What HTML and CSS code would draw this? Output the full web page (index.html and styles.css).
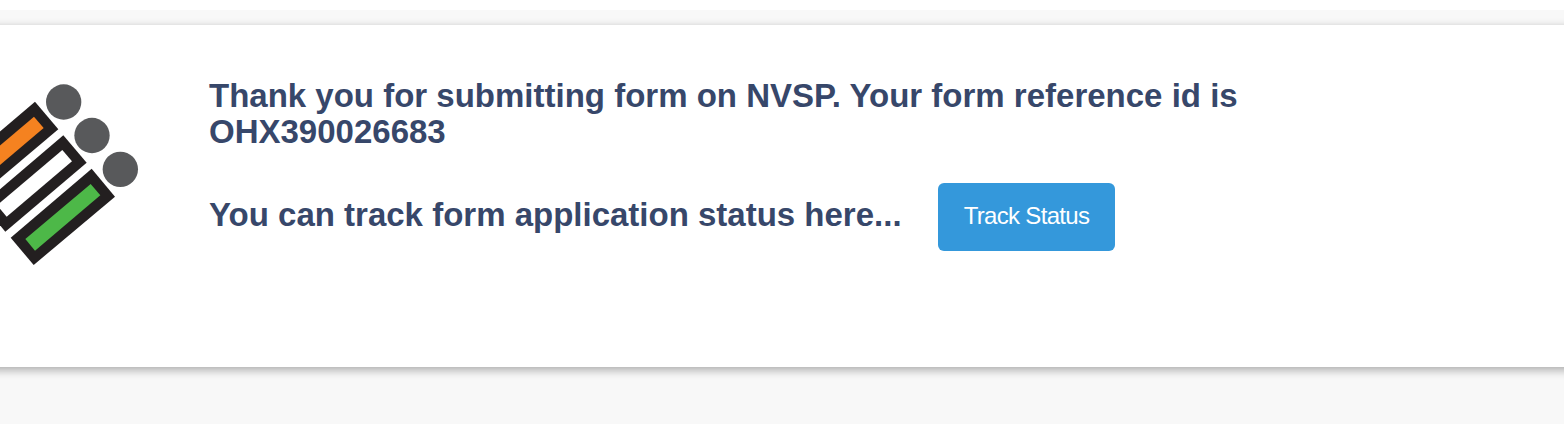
FILE: index.html
```
<!DOCTYPE html>
<html lang="en">
<head>
<meta charset="utf-8">
<title>Form submitted</title>
<link rel="stylesheet" href="styles.css">
</head>
<body>
<main class="page">
  <section class="card">
    <svg class="logo" viewBox="0 0 450 600" aria-hidden="true">
      <g fill="#231f20">
        <path d="M105 95 175 178-69 384-138 302Z"/>
        <path d="M190 196 260 278 16 485-53 403Z"/>
        <path d="M275 296 345 380 101 585 32 503Z"/>
      </g>
      <path fill="#f58220" d="M102 140 131 174-65 340-94 306Z"/>
      <path fill="#fff" d="M187 240 216 274 20 440-9 406Z"/>
      <path fill="#4db848" d="M272 342 301 376 105 542 76 507Z"/>
      <g fill="#58595b">
        <circle cx="191" cy="96" r="53"/>
        <circle cx="276" cy="196.500" r="53"/>
        <circle cx="361" cy="298" r="53"/>
      </g>
    </svg>
    <div class="content">
      <h1 class="message">Thank you for submitting form on NVSP. Your form reference id is<br>OHX390026683</h1>
      <div class="track">
        <h2 class="message">You can track form application status here...</h2>
        <button class="button" type="button">Track Status</button>
      </div>
    </div>
  </section>
</main>
</body>
</html>
```

FILE: styles.css
```
body {
  display: flow-root;
  margin: 0;
  background: #fff;
  font-family: "Liberation Sans", Arial, sans-serif;
}

.page {
  box-sizing: border-box;
  height: 414px;
  margin-top: 10px;
  padding-top: 15px;
  background: #f8f8f8;
  overflow: hidden;
}

.card {
  display: flex;
  height: 342px;
  margin: 0 -20px;
  padding: 0 20px;
  background: #fff;
  box-shadow: 0 3px 9px rgba(0, 0, 0, .32);
}

.logo {
  flex: none;
  width: 150px;
  height: 200px;
  margin-top: 45px;
}

.content {
  padding: 53px 0 0 59px;
}

.message {
  margin: 0;
  color: #37476a;
  font-size: 33px;
  font-weight: 700;
  line-height: 36px;
  white-space: nowrap;
}

.track {
  display: flex;
  align-items: center;
  margin-top: 33px;
}

.track .message {
  width: 729px;
  padding-bottom: 4px;
}

.button {
  width: 177px;
  height: 68px;
  padding: 0 0 2px;
  border: 0;
  border-radius: 6px;
  background: #3498db;
  color: #fff;
  font: 24px/28px "Liberation Sans", Arial, sans-serif;
  letter-spacing: -.68px;
}
```
